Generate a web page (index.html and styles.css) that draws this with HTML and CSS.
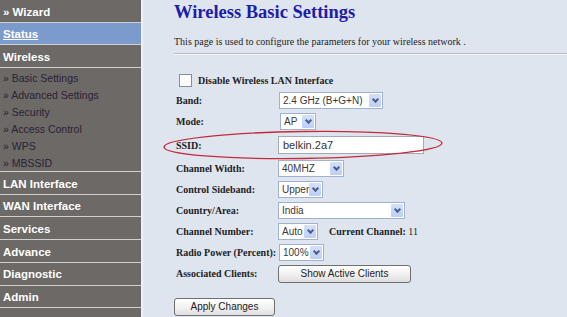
FILE: index.html
```html
<!DOCTYPE html>
<html lang="en">

<head>
  <meta charset="UTF-8">
  <title>Wireless Basic Settings</title>
  <link rel="stylesheet" href="styles.css">
</head>

<body>
  <nav class="sidebar">
    <a href="#" class="menu-item">&raquo; Wizard</a>
    <a href="#" class="menu-item active">Status</a>
    <a href="#" class="menu-item">Wireless</a>
    <div class="submenu">
      <a href="#" class="sub-item">&raquo; Basic Settings</a>
      <a href="#" class="sub-item">&raquo; Advanced Settings</a>
      <a href="#" class="sub-item">&raquo; Security</a>
      <a href="#" class="sub-item">&raquo; Access Control</a>
      <a href="#" class="sub-item">&raquo; WPS</a>
      <a href="#" class="sub-item">&raquo; MBSSID</a>
    </div>
    <a href="#" class="menu-item">LAN Interface</a>
    <a href="#" class="menu-item">WAN Interface</a>
    <a href="#" class="menu-item">Services</a>
    <a href="#" class="menu-item">Advance</a>
    <a href="#" class="menu-item">Diagnostic</a>
    <a href="#" class="menu-item">Admin</a>
  </nav>

  <div class="content">
    <h1>Wireless Basic Settings</h1>
    <p class="intro">This page is used to configure the parameters for your wireless network .</p>
    <hr>

    <form class="settings">
      <label class="check-row"><input type="checkbox"> Disable Wireless LAN Interface</label>

      <div class="row">
        <span class="label">Band:</span>
        <div class="select" style="width: 104px; margin-left: 1px"><span>2.4 GHz (B+G+N)</span><i class="arrow"></i></div>
      </div>
      <div class="row">
        <span class="label">Mode:</span>
        <div class="select" style="width: 36px; margin-left: 2px"><span>AP</span><i class="arrow"></i></div>
      </div>
      <div class="row ssid-row">
        <span class="label">SSID:</span>
        <input class="text-input" type="text" value="belkin.2a7">
        <!-- marcação vermelha por cima da linha -->
        <svg class="highlight" width="290" height="36" viewBox="0 0 290 36">
          <ellipse cx="142" cy="16" rx="139" ry="13.5" transform="rotate(-0.8 142 16)" fill="none" stroke="#c42b3a" stroke-width="1.4" />
        </svg>
      </div>
      <div class="row">
        <span class="label">Channel Width:</span>
        <div class="select" style="width: 66px"><span>40MHZ</span><i class="arrow"></i></div>
      </div>
      <div class="row">
        <span class="label">Control Sideband:</span>
        <div class="select" style="width: 45px"><span>Upper</span><i class="arrow"></i></div>
      </div>
      <div class="row">
        <span class="label">Country/Area:</span>
        <div class="select" style="width: 127px"><span>India</span><i class="arrow"></i></div>
      </div>
      <div class="row">
        <span class="label">Channel Number:</span>
        <div class="select" style="width: 40px"><span>Auto</span><i class="arrow"></i></div>
        <span class="current"><b>Current Channel:</b> 11</span>
      </div>
      <div class="row">
        <span class="label">Radio Power (Percent):</span>
        <div class="select" style="width: 45px; margin-left: 1px"><span>100%</span><i class="arrow"></i></div>
      </div>
      <div class="row">
        <span class="label">Associated Clients:</span>
        <button type="button" class="btn btn-clients">Show Active Clients</button>
      </div>

      <div class="actions">
        <button type="button" class="btn btn-apply">Apply Changes</button>
      </div>
    </form>
  </div>
</body>

</html>
```

FILE: styles.css
```css
body {
  margin: 0;
  display: flex;
  height: 100vh;
  overflow: hidden;
  background: #dfe5ee;
  font-family: "Liberation Serif", "Times New Roman", serif;
  color: #222;
}

/* menu lateral */
.sidebar {
  width: 141px;
  flex-shrink: 0;
  background: #6c6966;
  border-right: 2px solid #eef1f6;
}

.menu-item {
  display: block;
  height: 20.2px;
  padding: 1.5px 0 0 3px;
  border-bottom: 1px solid #d0d0d0;
  color: #fff;
  font: bold 11.5px "Liberation Sans", Arial, sans-serif;
  line-height: 20.2px;
  text-decoration: none;
}

.menu-item.active {
  background: #7b9bcc;
  text-decoration: underline;
}

.submenu {
  padding-top: 1px;
  border-bottom: 1px solid #d0d0d0;
}

.sidebar .sub-item {
  display: block;
  height: 15.5px;
  padding: 1.5px 0 0 3px;
  font-family: "Liberation Sans", Arial, sans-serif;
  font-size: 10.5px;
  line-height: 15.5px;
  color: #2a2236;
  text-decoration: none;
}

/* conteudo */
.content {
  flex: 1;
  padding-left: 31px;
}

h1 {
  margin: 0;
  padding-top: 2px;
  font-size: 18.5px;
  line-height: 21px;
  color: #1d1da8;
}

.intro {
  margin: 12px 0 0;
  font-size: 10px;
  line-height: 13px;
}

hr {
  margin: 5px 0 0;
  height: 0;
  border: 0;
  border-top: 1px solid #b9bec6;
  border-bottom: 1px solid #f3f5f8;
}

.settings {
  margin-top: 16px;
  padding-left: 2px;
}

.check-row {
  display: flex;
  align-items: center;
  gap: 6px;
  height: 19px;
  padding-left: 3px;
  font-size: 10px;
  font-weight: bold;
}

.check-row input {
  appearance: none;
  width: 13px;
  height: 13px;
  margin: 0;
  border: 1px solid #8a8f96;
  background: #fbfbfb;
}

.row {
  display: flex;
  align-items: center;
  height: 21px;
}

.ssid-row {
  position: relative;
  height: 26px;
}

.label {
  width: 102px;
  flex-shrink: 0;
  font-size: 10px;
  font-weight: bold;
}

.select {
  display: flex;
  align-items: center;
  box-sizing: border-box;
  height: 17px;
  border: 1px solid #9fb2cf;
  background: #fff;
  font: 10px "Liberation Sans", Arial, sans-serif;
  line-height: 15px;
  color: #3a3a3a;
}

.select span {
  flex: 1;
  padding-left: 3px;
  white-space: nowrap;
}

.arrow {
  position: relative;
  flex-shrink: 0;
  width: 12px;
  height: 13px;
  margin-right: 1px;
  border-radius: 1px;
  background: linear-gradient(#d4e0fa, #bccff5);
}

.arrow::after {
  content: '';
  position: absolute;
  left: 3.5px;
  top: 2.5px;
  width: 3px;
  height: 3px;
  border-right: 2px solid #4b5e88;
  border-bottom: 2px solid #4b5e88;
  transform: rotate(45deg);
}

.text-input {
  box-sizing: border-box;
  width: 146px;
  height: 18px;
  margin: 0;
  padding: 0 0 0 4px;
  border: 1px solid #a3aab5;
  background: #fff;
  font: 11px "Liberation Sans", Arial, sans-serif;
  color: #333;
}

.highlight {
  position: absolute;
  left: -15px;
  top: -3px;
}

.current {
  margin-left: 11px;
  font-size: 10px;
}

.btn {
  box-sizing: border-box;
  height: 18px;
  padding: 0;
  border: 1px solid #6f6f6f;
  border-radius: 3px;
  background: linear-gradient(#ffffff, #f0f0f0 55%, #dedede);
  font: 10px "Liberation Sans", Arial, sans-serif;
  color: #222;
}

.btn-clients {
  width: 133px;
}

.actions {
  margin: 12px 0 0 -2px;
}

.btn-apply {
  width: 101px;
}
```
